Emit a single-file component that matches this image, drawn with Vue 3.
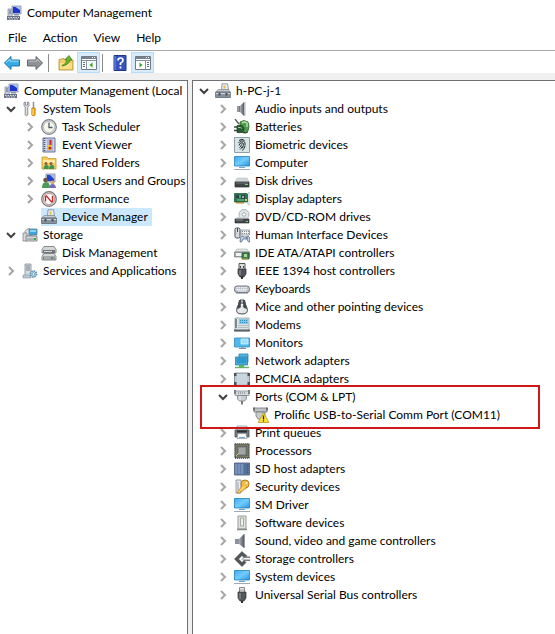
<script setup>
import { ref, computed } from 'vue'

const icons = {
  console: '<path d="M6 1h9v8H6z" fill="#c4cbdc" stroke="#8891a8" stroke-width=".8"/><path d="M7 2h7v6H7z" fill="#1d35c8"/><path d="M9.500 2H14v3z" fill="#a9c4f6"/><path d="M2 4h4v8H2z" fill="#c3cada" stroke="#828ba0" stroke-width=".7"/><path d="M3 6h2M3 8h2" stroke="#5f6a80"/><path d="M8 9h5v1.500H8z" fill="#8891a8"/><path d="M1 11h13v4H1z" fill="#667184"/><path d="M2 12.500h11M3 14h9" stroke="#d5dbe5" stroke-dasharray="1.500 1"/>',
  tools: '<path d="M2 1.500v3.200l1.200 1.500V14q1.300 1.600 2.600 0V6.200L7 4.700V1.500L5.500 1v3h-2V1z" fill="#d9dde2" stroke="#787e86" stroke-width=".8"/><path d="M11 1h1v6h-1z" fill="#9da3ab" stroke="#777" stroke-width=".4"/><path d="M9.800 7h3.400v7q-1.700 1.800-3.400 0z" fill="#f3ad1c" stroke="#b87a0c" stroke-width=".7"/><path d="M11 8v6" stroke="#ffe187"/>',
  clock: '<circle cx="8" cy="8" r="7.300" fill="#d5dae0" stroke="#7d838a" stroke-width="1.200"/><circle cx="8" cy="8" r="5.500" fill="#faf8e8" stroke="#a8afb6" stroke-width=".7"/><path d="M8 3.500V8.500h3.500" fill="none" stroke="#4d5b70" stroke-width="1.300"/>',
  event: '<path d="M2 1h12v14H2z" fill="#cdd5e8" stroke="#56658e" stroke-width=".9"/><path d="M3.500 1v14" stroke="#44548a" stroke-width="1.600" stroke-dasharray="1 1"/><path d="M6 3h6M6 5h6M6 7h6M6 9h6M6 11h6M6 13h6" stroke="#7987ae" stroke-width=".7"/><path d="M7 8h4v5H7z" fill="#f6c82f"/><path d="M8.500 3h2v5h-2z" fill="#d92525"/><circle cx="9" cy="11" r="1.600" fill="#c92828"/>',
  shared: '<path d="M1 3V2h5l1 1.500h8V14H1z" fill="#f4cd5d" stroke="#c49a32" stroke-width=".8"/><path d="M2 5h12v3H2z" fill="#ffe9a0"/><circle cx="5" cy="8.500" r="1.500" fill="#8b5e3b"/><circle cx="10" cy="8.500" r="1.500" fill="#8b5e3b"/><path d="M2.500 14q0-4 3-4t2 4zM8 14q0-4 3-4t2 4z" fill="#3a9550"/>',
  users: '<path d="M5 1h9v8H5z" fill="#c5cce0" stroke="#7c89a8" stroke-width=".8"/><path d="M6 2h7v6H6z" fill="#2440c8"/><path d="M9 2h4v4z" fill="#9fbdf5"/><circle cx="4.500" cy="7" r="2.300" fill="#76553d"/><path d="M1 15q0-6 4-6t4 6z" fill="#4a9b57"/><circle cx="11.500" cy="9.500" r="2" fill="#dda86e"/><path d="M8.500 15q0-4 3-4t3.500 4z" fill="#7567b9"/>',
  performance: '<circle cx="8" cy="8" r="7.300" fill="#dcdcdc" stroke="#777" stroke-width="1.200"/><circle cx="8" cy="8" r="5.500" fill="#fff" stroke="#a55" stroke-width=".6"/><path d="M4.500 10.500V5.500l1-.5 5 6 1-.5V5" fill="none" stroke="#c72a2a" stroke-width="1.400"/>',
  device: '<path d="M7 .8h5.500l1 6H6.500z" fill="#e9eff2" stroke="#7e878f" stroke-width=".8"/><path d="M8.500 2.500h2v3h-2z" fill="#e9bd49"/><path d="M1 9l2-2.500h10.500L15 9z" fill="#c5cbd0" stroke="#778087" stroke-width=".6"/><path d="M.6 9h14.800v5.500H.6z" fill="#87929b" stroke="#5d6871" stroke-width=".8"/><path d="M1 10.500h14" stroke="#d0d8de"/><path d="M3.500 10h2v2.500h-2zM10.500 10h2v2.500h-2z" fill="#465058"/>',
  storage: '<path d="M3 4q4-5 7 0v5H3z" fill="#dce3e8" stroke="#829096" stroke-width=".8"/><path d="M7 2h8v6H7z" fill="#39a7df" stroke="#6c7d89" stroke-width=".8"/><path d="M8 3h6v2H8z" fill="#83d4f7"/><path d="M1 6h4v8H1z" fill="#d6d9dc" stroke="#777" stroke-width=".7"/><path d="M4 9h11v5H4z" fill="#d7dadd" stroke="#707880" stroke-width=".8"/><path d="M5 12h7" stroke="#818990"/><path d="M12 11h2v2h-2z" fill="#42a648"/>',
  disks: '<path d="M3 1.500h10l2 3V8H1V4.500z" fill="#d3d6d7" stroke="#707476" stroke-width=".8"/><path d="M2 5h12v3H2z" fill="#6f7477"/><path d="M3 8.500h10l2 3V15H1v-3.500z" fill="#d5d8d9" stroke="#707476" stroke-width=".8"/><path d="M2 11.500h12v3H2z" fill="#777d80"/><path d="M3 6.500h8M3 13h7" stroke="#d7dbdc"/><path d="M12 12.500h1.500v1H12z" fill="#9ade8b"/>',
  services: '<path d="M3 1h6v12H3z" fill="#d6dbe0" stroke="#84909a" stroke-width=".8"/><path d="M4 3h4M4 5h4M4 7h4" stroke="#748491"/><path d="M1 12h8v3H1z" fill="#bcc7cf" stroke="#84909a" stroke-width=".6"/><circle cx="11.500" cy="11" r="3" fill="#bfdced" stroke="#5b94b7" stroke-width="1.800" stroke-dasharray="1.400 .9"/><circle cx="11.500" cy="11" r="1.200" fill="#fff" stroke="#5d93b4" stroke-width=".7"/>',
  audio: '<path d="M3 5h3v6H3z" fill="#777c83"/><path d="M4 5v6" stroke="#b6bbc0"/><path d="M6 5l4-4v14l-4-4z" fill="url(#metal)"/><path d="M10 1h1.500v14H10z" fill="#b5bbc0"/>',
  battery: '<path d="M1 0l4 5" stroke="#555" stroke-width="1.300"/><path d="M6 3q4-3 8 0 2 4 0 9-4 4-8 0z" fill="#4d9b4c" stroke="#286c2b" stroke-width=".8"/><path d="M8 4q2-2 5 0v4" fill="none" stroke="#b8e3b5" stroke-width="1.400"/><path d="M0 8h4M0 11.500h4" stroke="#444" stroke-width="1.500"/><path d="M3 6.500q7-1 7 3.500t-7 3.500z" fill="#295c30" stroke="#183d1d" stroke-width=".7"/><path d="M4 8.500q3-.5 4 1" fill="none" stroke="#a0cf9d"/><path d="M9 13q2 2 5 0" stroke="#333" fill="none"/>',
  biometric: '<path d="M.5.5h15v15H.5z" fill="#d8e4e6" stroke="#8e9fa5"/><path d="M5 3.500q3-2.500 5.500 0M4.500 6q3-4 6.500-.5v3M5 8.500q1-4 4-2.500 1 2-.5 5M5.500 10.500q1.500-1 2-3M6 12.500q1.500-1 2-3M8 13.500q2.500-1.500 3-4.500" fill="none" stroke="#22282c" stroke-width="1"/>',
  computer: '<path d="M.5 1.500h15v9.500H.5z" fill="url(#screen)" stroke="#2382bd" stroke-width=".8"/><path d="M6 11.500h4v1H6z" fill="#a8b7bf"/><path d="M0 14.500h16" stroke="#a0acb4"/><path d="M5 12.500h6" stroke="#6cabd0"/>',
  drive: '<path d="M3 5h10l2 4H1z" fill="#d5d8d9" stroke="#b1b5b7" stroke-width=".5"/><path d="M1 9h14v5H1z" fill="#404549" stroke="#272b2e" stroke-width=".7"/><path d="M2 10h12" stroke="#70777b"/><path d="M11 11h3v1h-3z" fill="#69dd5e"/>',
  display: '<path d="M.5 2.500h13v8.500H.5z" fill="#277850" stroke="#174d35" stroke-width=".7"/><path d="M2 4h3v3H2zM7 4h4v4H7z" fill="#314044"/><path d="M3 9h7M6 4v3" stroke="#80c49a"/><path d="M8 5h2v2H8z" fill="#8fb6b9"/><path d="M2 11h8v1.500H2z" fill="#b98935"/><path d="M13 3l2-2v13l-2-2" fill="none" stroke="#bdc6ca"/><path d="M11 8h2v2h-2z" fill="#dbcf45"/>',
  dvd: '<circle cx="10" cy="5.500" r="5" fill="#e0e5e7" stroke="#9ba4a9" stroke-width=".8"/><circle cx="10" cy="5.500" r="1.700" fill="#fff" stroke="#8c969b" stroke-width=".7"/><path d="M3 8h10l2 2H1z" fill="#d2d5d7"/><path d="M1 10h14v4H1z" fill="#44494d" stroke="#252a2d" stroke-width=".6"/><path d="M2 11h7" stroke="#888"/><path d="M12 12h2v1h-2z" fill="#66dd61"/>',
  hid: '<rect x="1" y="1" width="5" height="10" rx="1.500" fill="#d6dade" stroke="#495159"/><path d="M3.500 1v4" stroke="#495159"/><path d="M7 3h8.500v5H7z" fill="#eef0f2" stroke="#7c858d" stroke-width=".7"/><path d="M8 4.500h7M8 6.500h7" stroke="#7b858d" stroke-dasharray="1 1"/><path d="M6 15q0-6 2-6l2 1h2l2-1q2 0 2 6-2 1-3-3H9q-1 4-3 3z" fill="#c2d0e0" stroke="#536b88" stroke-width=".8"/><circle cx="13" cy="11" r=".8" fill="#284a80"/>',
  ide: '<path d="M3 4h10l2 3H1z" fill="#e3e5e6" stroke="#999" stroke-width=".5"/><path d="M.5 7h15v5H.5z" fill="#a3a8aa" stroke="#707578" stroke-width=".7"/><path d="M2 8h10v3H2z" fill="#f1f2f2"/><path d="M8 8h7v6H8z" fill="#398854" stroke="#1f5232" stroke-width=".8"/><path d="M10 9h3v3h-3z" fill="#abd99d"/><path d="M8 14h6" stroke="#caa43b"/>',
  firewire: '<path d="M5 .5h6v6H5z" fill="#ddd" stroke="#555"/><path d="M6.500 3v2M9.500 3v2" stroke="#444"/><path d="M4 6h8v5l-2 3H6l-2-3z" fill="#51545a" stroke="#292b2e" stroke-width=".7"/><path d="M6 7v5" stroke="#9b9fa5"/><path d="M7 13h2v3H7z" fill="#333"/>',
  keyboard: '<rect x=".5" y="5" width="15" height="6.500" rx="2.500" fill="#bcc1ca" stroke="#777e87"/><path d="M2.500 6.700h11M2.500 8.500h11M4 10h8" stroke="#fff" stroke-width="1" stroke-dasharray="1.500 .7"/><path d="M2 12h12" stroke="#727b86"/>',
  mouse: '<path d="M6 1h4q1 4 3 8 2 6-5 6T3 9q2-4 3-8z" fill="#e4e6e8" stroke="#484c51"/><path d="M5 1h2l1 5-2 3-3 1zM11 1H9L8 6l2 3 3 1z" fill="#454a50"/><circle cx="8" cy="6" r="1.300" fill="#f3f3f3"/><path d="M6 10q-1 2 0 3" stroke="#fff"/>',
  modem: '<path d="M1 1h14v13H1z" fill="#dce2e5" stroke="#84929a" stroke-width=".7"/><path d="M5 2h9v5H5z" fill="#80c8ea"/><path d="M6 3.500h7M6 5.500h7" stroke="#2a8fbd" stroke-dasharray="1 1"/><path d="M2 2v9" stroke="#646f75" stroke-width="1.500"/><path d="M5 8v4M7 8v4M9 8v4M11 8v4M13 8v4" stroke="#8d999f" stroke-dasharray="1 1"/><path d="M0 13.500h16" stroke="#59646b" stroke-width="2"/>',
  monitor: '<path d="M.5 3h15v9H.5z" fill="#51b8ed" stroke="#3587b4" stroke-width=".8"/><path d="M7 4h7v5H7z" fill="#9dddfa" stroke="#e3f6ff" stroke-width=".7"/><path d="M5 13.500h7" stroke="#7a929f"/><path d="M7 12h3v1H7z" fill="#91a7b2"/>',
  network: '<path d="M5 1h9v8H5z" fill="#51b7e7" stroke="#2980aa" stroke-width=".8"/><path d="M1.500 4h12v8h-12z" fill="#47a9d9" stroke="#2f7fa8" stroke-width=".8"/><path d="M3 5h9v5H3z" fill="#2e9acb"/><path d="M5 12h5v2H5z" fill="#57b95a"/><path d="M1 14.500h14" stroke="#66ae69" stroke-width="1.400"/>',
  pcmcia: '<rect x=".5" y="2" width="15" height="12.500" rx="1" fill="#bec9d2" stroke="#74828e" stroke-width=".8"/><path d="M3 3h10v10H3z" fill="#c9d5df"/><path d="M0 2h2.500v3H0zM13.500 2H16v3h-2.500zM0 11h2.500v3.500H0zM13.500 11H16v3.500h-2.500z" fill="#4a545c"/>',
  port: '<path d="M1 2h14v4.500H1z" fill="#d6dade" stroke="#858c91" stroke-width=".8"/><path d="M0 1h2v4H0zM14 1h2v4h-2z" fill="#7b8287"/><path d="M4 4h8" stroke="#666" stroke-dasharray="1 1"/><path d="M3.500 6.500h9V10l-2 2h-5l-2-2z" fill="#c7cccf" stroke="#7a8185" stroke-width=".8"/><path d="M6 7v4" stroke="#f5f6f7"/><path d="M7 12h2v3.500H7z" fill="#777d81"/>',
  warning: '<path d="M1 1h13v4H1z" fill="#bfc4c8" stroke="#70787e" stroke-width=".8"/><path d="M0 .5h2v3H0zM13 .5h2v3h-2z" fill="#6b7278"/><path d="M3 5h9v4l-2 3H5L3 9z" fill="#c8cccf" stroke="#777" stroke-width=".8"/><path d="M10.500 5.500l5.300 10H5.200z" fill="#ffe52e" stroke="#b39719" stroke-width=".8"/><path d="M10.500 8.500v4M10.500 13.300v1.300" stroke="#222" stroke-width="1.300"/>',
  printer: '<path d="M3 1h10v6H3z" fill="#edf0f2" stroke="#8c9499" stroke-width=".7"/><path d="M1 5h14v7H1z" fill="#747d83" stroke="#434b50" stroke-width=".8"/><path d="M3 6.500h10" stroke="#282e32" stroke-width="2"/><path d="M4 8.500h8l1 5H3z" fill="#f6f7f8" stroke="#8a949b" stroke-width=".7"/><path d="M5 12.500h6" stroke="#71abc7"/>',
  cpu: '<path d="M.8.8h14.400v14.400H.8z" fill="#4b4e50" stroke="#303335" stroke-dasharray="1 1"/><path d="M2 2h12v12H2z" fill="#5b5e60" stroke="#aaa46e" stroke-width=".7"/><path d="M4 4h8v8H4z" fill="#a3a6a7" stroke="#777"/><path d="M2 13l3-3" stroke="#d0c37b"/>',
  sd: '<path d="M.5 2h15v12H.5z" fill="#667fa7" stroke="#42597e" stroke-width=".8"/><path d="M2 3v10M5 3v10M8 3v10" stroke="#8ca5ca"/><path d="M10 3l4-1v12h-4z" fill="#547097"/><path d="M14 3v10" stroke="#2c456a" stroke-dasharray="1 1"/>',
  security: '<path d="M2 1h5v13H2z" fill="#e8eaec" stroke="#7d8590" stroke-width=".8"/><path d="M4 3v9" stroke="#9ba3aa"/><circle cx="11" cy="5" r="4" fill="#f4bd43" stroke="#b67c16"/><circle cx="12.500" cy="4" r="1" fill="#fff4cc"/><path d="M8 7l-5 7h3l1-2h2l1-2h2V8" fill="#ffd35d" stroke="#b67c16" stroke-width=".7"/>',
  software: '<path d="M4 1h8v13H4z" fill="#dfe3df" stroke="#979d97"/><path d="M6.500 3h3v8h-3z" fill="#eff2ec" stroke="#929b8d" stroke-width=".8"/><path d="M3 14.500h10" stroke="#858d87" stroke-width="1.500"/>',
  sound: '<path d="M1 6h4v5H1z" fill="#8b9299"/><path d="M5 6l5-5v14l-5-4z" fill="url(#metal)"/><path d="M10.500 1v14" stroke="#989fa5"/>',
  storageController: '<path d="M10 2.500L8 .5.500 8 8 15.500l4-4-2-2-2 2L4.500 8 8 4.500l2 2 3-1.500z" fill="#515558" stroke="#303437" stroke-width=".5"/><path d="M9 5.500h7V7H9zM9 8.500h7V10H9z" fill="#747a7e"/><circle cx="9" cy="8" r="1.500" fill="#bfc4c7"/>',
  usb: '<path d="M5.500.5h5v5h-5z" fill="#ebedee" stroke="#888"/><path d="M7 2v2M9 2v2" stroke="#777" stroke-width=".7"/><path d="M4 5h8v6l-2 3H6l-2-3z" fill="#54585d" stroke="#2e3134" stroke-width=".7"/><path d="M6 6v6" stroke="#969a9f"/><path d="M7 14h2v2H7z" fill="#333"/>',
  back: '<path d="M.4 8L7 1.500V5h8.500v6H7v3.500z" fill="#36abe5" stroke="#176b9f" stroke-width=".9"/><path d="M2.300 7.600L6 4v2.200h8.500" fill="none" stroke="#9ee3ff"/>',
  forward: '<path d="M15.600 8L9 1.500V5H.5v6H9v3.500z" fill="#8e9295" stroke="#5b5f62" stroke-width=".9"/><path d="M1.500 6.200H10V4l3.500 3.500" fill="none" stroke="#c0c3c5"/>',
  up: '<path d="M1 4.500l5-1 1 1.500h8v10H1z" fill="#f4cd68" stroke="#b38b35" stroke-width=".8"/><path d="M2 8h12v6H2z" fill="#ffdf86"/><path d="M4 10.500q4-1 5-5.500L7 4.500 11 .5l3 4.500h-2q-1 5-8 6z" fill="#67b82f" stroke="#347915" stroke-width=".7"/>',
  tree: '<path d="M.5 1.500h15v13H.5z" fill="#fff" stroke="#727b85"/><path d="M1 3h14" stroke="#758290" stroke-width="2"/><path d="M11 2.500h3" stroke="#fff" stroke-dasharray="1 1"/><path d="M1 5.500h14M5.500 6v8" stroke="#87929e"/><path d="M2 7.500h2M2 9.500h2M2 11.500h2" stroke="#56718c"/><path d="M7 6h8v8H7z" fill="#f4f7f8"/><path d="M11.500 7.500v5L8.500 10z" fill="#37a32c"/>',
  help: '<path d="M2 .5h12v15H2z" fill="#3554bd" stroke="#213783"/><path d="M3 1v14" stroke="#7891e0"/><path d="M6 5.500q0-2.500 2.500-2.500T11 5.200Q11 7 8.500 8.300V10M8.500 11.500v2" fill="none" stroke="#fff" stroke-width="1.700"/>',
  pane: '<path d="M.5 1.500h15v13H.5z" fill="#fff" stroke="#727b85"/><path d="M1 3h14" stroke="#758290" stroke-width="2"/><path d="M11 2.500h3" stroke="#fff" stroke-dasharray="1 1"/><path d="M1 5.500h14M10.500 6v8" stroke="#87929e"/><path d="M12 7.500h2M12 9.500h2M12 11.500h2" stroke="#56718c"/><path d="M4.500 7.500v5l3-2.500z" fill="#37a32c"/>',
}

const menus = ['File', 'Action', 'View', 'Help']
const tools = [
  { icon: 'back', label: 'Back' },
  { icon: 'forward', label: 'Forward' },
  { divider: true },
  { icon: 'up', label: 'Up one level' },
  { icon: 'tree', label: 'Show console tree', on: true },
  { divider: true },
  { icon: 'help', label: 'Help' },
  { icon: 'pane', label: 'Show action pane', on: true },
]

const leaf = (icon, label) => ({ icon, label, state: 'closed' })

const consoleTree = ref([
  {
    icon: 'tools', label: 'System Tools', state: 'open',
    children: [
      leaf('clock', 'Task Scheduler'),
      leaf('event', 'Event Viewer'),
      leaf('shared', 'Shared Folders'),
      leaf('users', 'Local Users and Groups'),
      leaf('performance', 'Performance'),
      { icon: 'device', label: 'Device Manager', selected: true },
    ],
  },
  { icon: 'storage', label: 'Storage', state: 'open', children: [{ icon: 'disks', label: 'Disk Management' }] },
  leaf('services', 'Services and Applications'),
])

const devices = ref([
  leaf('audio', 'Audio inputs and outputs'),
  leaf('battery', 'Batteries'),
  leaf('biometric', 'Biometric devices'),
  leaf('computer', 'Computer'),
  leaf('drive', 'Disk drives'),
  leaf('display', 'Display adapters'),
  leaf('dvd', 'DVD/CD-ROM drives'),
  leaf('hid', 'Human Interface Devices'),
  leaf('ide', 'IDE ATA/ATAPI controllers'),
  leaf('firewire', 'IEEE 1394 host controllers'),
  leaf('keyboard', 'Keyboards'),
  leaf('mouse', 'Mice and other pointing devices'),
  leaf('modem', 'Modems'),
  leaf('monitor', 'Monitors'),
  leaf('network', 'Network adapters'),
  leaf('pcmcia', 'PCMCIA adapters'),
  {
    icon: 'port', label: 'Ports (COM & LPT)', state: 'open', marked: true,
    children: [{ icon: 'warning', label: 'Prolific USB-to-Serial Comm Port (COM11)' }],
  },
  leaf('printer', 'Print queues'),
  leaf('cpu', 'Processors'),
  leaf('sd', 'SD host adapters'),
  leaf('security', 'Security devices'),
  leaf('computer', 'SM Driver'),
  leaf('software', 'Software devices'),
  leaf('sound', 'Sound, video and game controllers'),
  leaf('storageController', 'Storage controllers'),
  leaf('computer', 'System devices'),
  leaf('usb', 'Universal Serial Bus controllers'),
])

const devicesOpen = ref(true)
const panes = computed(() => [
  { id: 'console', icon: 'console', label: 'Computer Management (Local', open: true, items: consoleTree.value },
  { id: 'devices', icon: 'device', label: 'h-PC-j-1', open: devicesOpen.value, items: devices.value },
])

function toggle(item) {
  item.state = item.state === 'open' ? 'closed' : 'open'
}
</script>

<template>
  <div class="window">
    <svg class="paints" aria-hidden="true">
      <defs>
        <linearGradient id="screen" x2="1" y2="1">
          <stop stop-color="#3fa9ec" /><stop offset=".5" stop-color="#72ccff" /><stop offset="1" stop-color="#2794d8" />
        </linearGradient>
        <linearGradient id="metal">
          <stop stop-color="#aeb3b8" /><stop offset="1" stop-color="#545a61" />
        </linearGradient>
      </defs>
    </svg>
    <header class="title">
      <svg class="icon" viewBox="0 0 16 16" aria-hidden="true" v-html="icons.console"></svg>
      <h1>Computer Management</h1>
    </header>
    <nav class="menu">
      <button v-for="m in menus" :key="m" type="button">{{ m }}</button>
    </nav>
    <div class="toolbar" role="toolbar">
      <template v-for="(t, i) in tools" :key="i">
        <span v-if="t.divider" class="divider"></span>
        <button v-else type="button" :class="{ on: t.on }" :aria-label="t.label">
          <svg class="icon" viewBox="0 0 16 16" aria-hidden="true" v-html="icons[t.icon]"></svg>
        </button>
      </template>
    </div>
    <main class="panes">
      <section v-for="pane in panes" :key="pane.id" class="pane" :class="pane.id">
        <div class="row root">
          <button v-if="pane.id === 'devices'" class="twist" :class="{ open: pane.open }" type="button" :aria-label="'Toggle ' + pane.label" @click="devicesOpen = !devicesOpen">
            <svg viewBox="0 0 12 12"><path d="M4 2l4 4-4 4" /></svg>
          </button>
          <svg class="icon" viewBox="0 0 16 16" aria-hidden="true" v-html="icons[pane.icon]"></svg>
          <span class="label">{{ pane.label }}</span>
        </div>
        <ul v-if="pane.open">
          <li v-for="item in pane.items" :key="item.label" :class="{ marked: item.marked }">
            <div class="row">
              <button class="twist" :class="item.state" type="button" :aria-label="'Toggle ' + item.label" @click="toggle(item)">
                <svg viewBox="0 0 12 12"><path d="M4 2l4 4-4 4" /></svg>
              </button>
              <svg class="icon" viewBox="0 0 16 16" aria-hidden="true" v-html="icons[item.icon]"></svg>
              <span class="label">{{ item.label }}</span>
            </div>
            <ul v-if="item.children && item.state === 'open'">
              <li v-for="child in item.children" :key="child.label">
                <div class="row nested">
                  <button v-if="child.state" class="twist" :class="child.state" type="button" :aria-label="'Toggle ' + child.label" @click="toggle(child)">
                    <svg viewBox="0 0 12 12"><path d="M4 2l4 4-4 4" /></svg>
                  </button>
                  <span v-else class="twist"></span>
                  <span class="entry" :class="{ selected: child.selected }">
                    <svg class="icon" viewBox="0 0 16 16" aria-hidden="true" v-html="icons[child.icon]"></svg>
                    <span class="label">{{ child.label }}</span>
                  </span>
                </div>
              </li>
            </ul>
          </li>
        </ul>
      </section>
    </main>
  </div>
</template>

<style>
body {
  margin: 0;
}
</style>

<style scoped>
.window {
  display: flex;
  flex-direction: column;
  min-height: 100vh;
  background: #fff;
  color: #000;
  font: 12px/18px Lato, "Segoe UI", sans-serif;
}
.paints {
  position: absolute;
  width: 0;
  height: 0;
}
button {
  padding: 0;
  border: 0;
  background: none;
  color: inherit;
  font: inherit;
}
ul {
  margin: 0;
  padding: 0;
  list-style: none;
}
.icon {
  flex: none;
  display: block;
  width: 16px;
  height: 16px;
}
.title {
  display: flex;
  align-items: center;
  gap: 5px;
  height: 26px;
  padding-left: 6px;
}
h1 {
  margin: 0;
  font-size: 12px;
  font-weight: 400;
}
.menu {
  display: flex;
  gap: 16px;
  height: 24px;
  padding-left: 8px;
  border-bottom: 1px solid #a8a8a8;
}
.toolbar {
  display: flex;
  align-items: flex-end;
  height: 22px;
  border-bottom: 7px solid #f0f0f0;
}
.toolbar button {
  display: flex;
  align-items: center;
  justify-content: center;
  box-sizing: border-box;
  width: 23px;
  height: 21px;
}
.toolbar .on {
  border: 1px solid #b5dcfa;
  background: #d8ebfb;
}
.divider {
  width: 1px;
  height: 18px;
  margin: 0 5px 1px 2px;
  background: #8c8c8c;
}
.panes {
  flex: 1;
  display: grid;
  grid-template-columns: 188px minmax(0, 1fr);
  gap: 4px;
  background: #f0f0f0;
}
.pane {
  overflow: hidden;
  padding-top: 1px;
  border-top: 1px solid #6e7074;
  background: #fff;
}
.console {
  border-right: 1px solid #6e7074;
}
.devices {
  border-left: 1px solid #6e7074;
}
.row {
  display: flex;
  align-items: center;
  gap: 5px;
  height: 18px;
  padding-left: 5px;
  white-space: nowrap;
}
.console .root {
  padding-left: 3px;
}
.devices .row {
  padding-left: 24px;
}
.devices .root {
  padding-left: 5px;
}
.row.nested {
  padding-left: 24px;
}
.devices .row.nested {
  padding-left: 43px;
}
.twist {
  flex: none;
  width: 12px;
  height: 12px;
}
.twist svg {
  display: block;
  width: 12px;
  height: 12px;
  fill: none;
  stroke: #a6a6a6;
  stroke-width: 2;
}
.twist.open svg {
  stroke: #404040;
  transform: rotate(90deg);
}
.entry {
  display: flex;
  align-items: center;
  gap: 5px;
}
.selected {
  padding-right: 4px;
  background: #cce8ff;
}
.marked {
  position: relative;
}
.marked::after {
  content: "";
  position: absolute;
  inset: -3px 15px -5px 7px;
  border: 2px solid #cf1717;
  pointer-events: none;
}
</style>
